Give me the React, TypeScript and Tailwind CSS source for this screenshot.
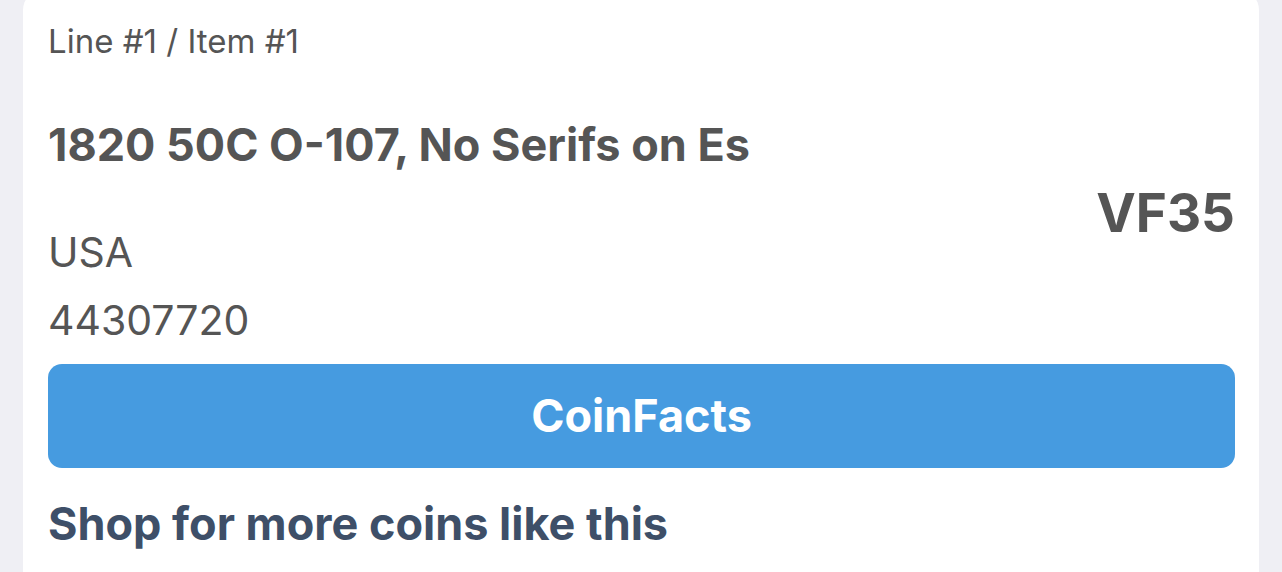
import React from 'react';

const font = { fontFamily: 'Inter, "Noto Sans", sans-serif' };

export default function App() {
  return (
    <div className="h-[572px] w-full overflow-hidden bg-[#efeff4]" style={font}>
      <div className="ml-[23px] mt-[-10px] w-[1236px] rounded-[20px] bg-white pl-[25px] pr-[24px] pt-[31px] pb-10">
        <div className="text-[33px] leading-[40px] text-[#555555]">Line #1 / Item #1</div>

        <div className="mt-[56px] flex items-center justify-between">
          <div className="flex flex-col">
            <div className="text-[45px] font-bold leading-[56px] text-[#555555]">
              1820 50C O-107, No Serifs on Es
            </div>
            <div className="mt-[54px] text-[41px] leading-[50px] text-[#555555]">USA</div>
            <div className="mt-[18px] text-[41px] leading-[50px] text-[#555555]">44307720</div>
          </div>
          <div className="mb-[36px] text-[53px] font-bold leading-[64px] text-[#555555]">VF35</div>
        </div>

        <button className="mt-[19px] flex h-[104px] w-full items-center justify-center rounded-[14px] bg-[#469be0] text-[45px] font-bold text-white">
          CoinFacts
        </button>

        <div className="mt-[29px] text-[45px] font-bold leading-[54px] text-[#3e4f68]">
          Shop for more coins like this
        </div>
      </div>
    </div>
  );
}
